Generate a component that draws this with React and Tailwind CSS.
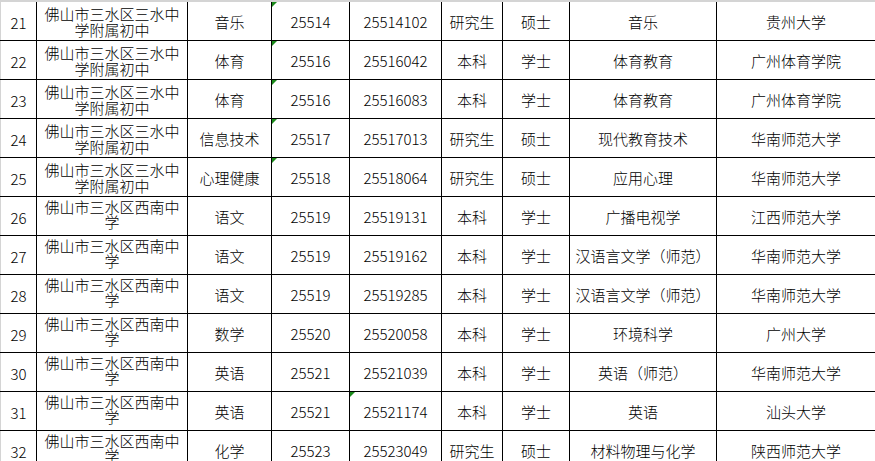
import React from "react";

const SS = "佛山市三水区三水中学附属初中";
const XN = "佛山市三水区西南中学";

const rows = [
  ["21", SS, "音乐", "25514", "25514102", "研究生", "硕士", "音乐", "贵州大学", 3],
  ["22", SS, "体育", "25516", "25516042", "本科", "学士", "体育教育", "广州体育学院", 3],
  ["23", SS, "体育", "25516", "25516083", "本科", "学士", "体育教育", "广州体育学院", 3],
  ["24", SS, "信息技术", "25517", "25517013", "研究生", "硕士", "现代教育技术", "华南师范大学", 3],
  ["25", SS, "心理健康", "25518", "25518064", "研究生", "硕士", "应用心理", "华南师范大学", 3],
  ["26", XN, "语文", "25519", "25519131", "本科", "学士", "广播电视学", "江西师范大学", 0],
  ["27", XN, "语文", "25519", "25519162", "本科", "学士", "汉语言文学（师范）", "华南师范大学", 0],
  ["28", XN, "语文", "25519", "25519285", "本科", "学士", "汉语言文学（师范）", "华南师范大学", 0],
  ["29", XN, "数学", "25520", "25520058", "本科", "学士", "环境科学", "广州大学", 0],
  ["30", XN, "英语", "25521", "25521039", "本科", "学士", "英语（师范）", "华南师范大学", 0],
  ["31", XN, "英语", "25521", "25521174", "本科", "学士", "英语", "汕头大学", 4],
  ["32", XN, "化学", "25523", "25523049", "研究生", "硕士", "材料物理与化学", "陕西师范大学", 0],
];

function Tri() {
  return (
    <span className="absolute left-0 top-0 w-0 h-0 border-t-[5px] border-r-[5px] border-t-[#1a8a1a] border-r-transparent" />
  );
}

function Cell({ w, children, tri, last }) {
  return (
    <div
      className={`relative shrink-0 flex items-center justify-center pt-[3px] ${w} ${last ? "" : "border-r border-black"}`}
    >
      {tri && <Tri />}
      <span className="whitespace-nowrap">{children}</span>
    </div>
  );
}

export default function App() {
  return (
    <div className="w-[875px] h-[461px] overflow-hidden bg-white text-black text-[15px] font-light font-['Noto_Sans_CJK_SC',sans-serif] border-t-2 border-t-[#d4d4d4]">
      {rows.map((r) => {
        const xn = r[1] === XN;
        return (
          <div key={r[0]} className="flex h-[39px] border-b border-black">
            <div className="shrink-0 w-[37px] flex items-center justify-center pt-[2px] border-r border-black border-l border-l-[#d4d4d4] leading-none">
              {r[0]}
            </div>
            <div className="shrink-0 w-[151px] border-r border-black overflow-hidden">
              <div
                className={`px-[5px] text-center ${xn ? "pt-[2px] leading-[15px]" : "pt-[4px] leading-[16px]"}`}
              >
                {r[1]}
              </div>
            </div>
            <Cell w="w-[84px]">{r[2]}</Cell>
            <Cell w="w-[78px]" tri={r[9] === 3}>{r[3]}</Cell>
            <Cell w="w-[92px]" tri={r[9] === 4}>{r[4]}</Cell>
            <Cell w="w-[61px]">{r[5]}</Cell>
            <Cell w="w-[67px]">{r[6]}</Cell>
            <Cell w="w-[147px]">{r[7]}</Cell>
            <Cell w="flex-1" last>{r[8]}</Cell>
          </div>
        );
      })}
    </div>
  );
}
